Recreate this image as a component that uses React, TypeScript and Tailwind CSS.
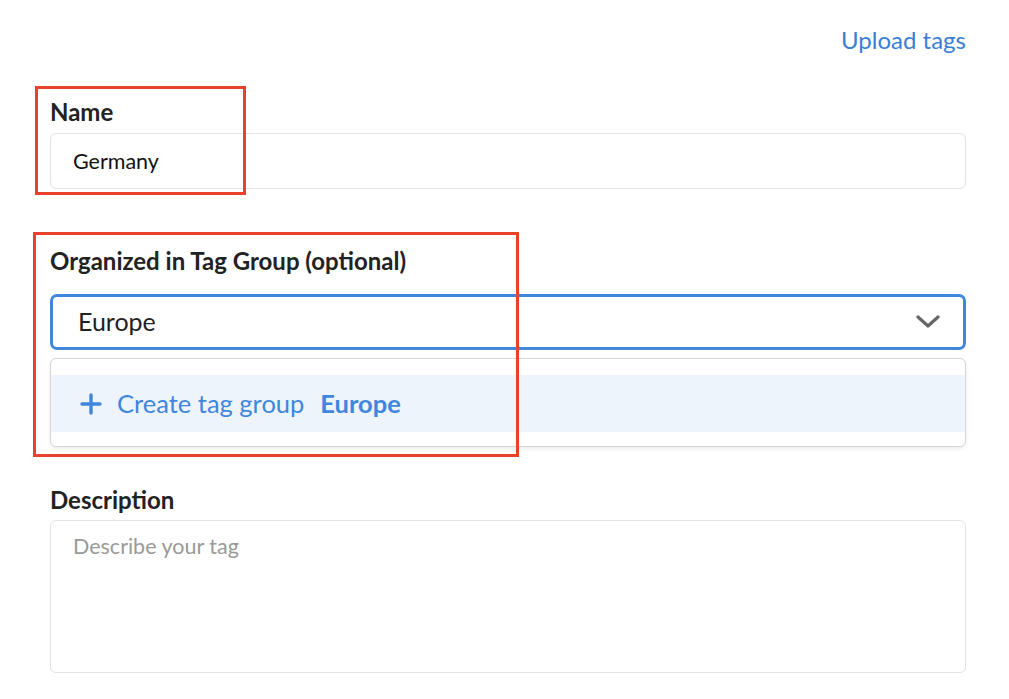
import React from "react";

export default function App() {
  return (
    <div className="relative min-h-[699px] w-full bg-white font-['Lato',sans-serif] text-[#222]">
      <div className="flex flex-col pl-[50px] pr-[43px] pt-[26px]">
        <div className="flex justify-end">
          <a className="text-[24px] leading-[28px] text-[#3a7ed6]">Upload tags</a>
        </div>
        <label className="mt-[44px] text-[24px] font-bold leading-[28px] text-[#222]">Name</label>
        <div className="mt-[7px] flex h-[56px] items-center rounded-[6px] border border-[#e3e3e3] px-[22px] text-[21.5px] text-[#111]">
          Germany
        </div>
        <label className="mt-[58px] text-[24px] font-bold leading-[28px] text-[#222]">
          Organized in Tag Group (optional)
        </label>
        <div className="mt-[19px] flex h-[56px] items-center justify-between rounded-[7px] border-[3px] border-[#3f86dd] pl-[25px] pr-[23px] text-[25px] text-[#222]">
          <span>Europe</span>
          <svg width="24" height="14" viewBox="0 0 24 14" fill="none">
            <path d="M2 2l10 9 10-9" stroke="#666" strokeWidth="3.2" strokeLinecap="round" strokeLinejoin="round" />
          </svg>
        </div>
        <div className="mt-[8px] rounded-[6px] border border-[#d6d6d6] bg-white pb-[14px] pt-[16px] shadow-[0_2px_4px_rgba(0,0,0,0.08)]">
          <div className="flex h-[57px] items-center bg-[#edf4fc] pl-[29px] text-[25.5px] text-[#3f86dd]">
            <svg width="22" height="22" viewBox="0 0 22 22" className="mr-[15px]">
              <path d="M11 2v18M2 11h18" stroke="#3f86dd" strokeWidth="3.4" strokeLinecap="round" />
            </svg>
            <span>Create tag group</span>
            <span className="ml-[16px] font-bold">Europe</span>
          </div>
        </div>
        <label className="mt-[39px] text-[24px] font-bold leading-[28px] text-[#222]">Description</label>
        <div className="mt-[6px] h-[153px] rounded-[6px] border border-[#e3e3e3] px-[22px] pt-[11px] text-[21.5px] leading-[28px] text-[#999]">
          Describe your tag
        </div>
      </div>
      <div className="pointer-events-none absolute left-[35px] top-[86px] h-[109px] w-[211px] border-[3px] border-[#e8412c]" />
      <div className="pointer-events-none absolute left-[33px] top-[232px] h-[225px] w-[486px] border-[3px] border-[#e8412c]" />
    </div>
  );
}
